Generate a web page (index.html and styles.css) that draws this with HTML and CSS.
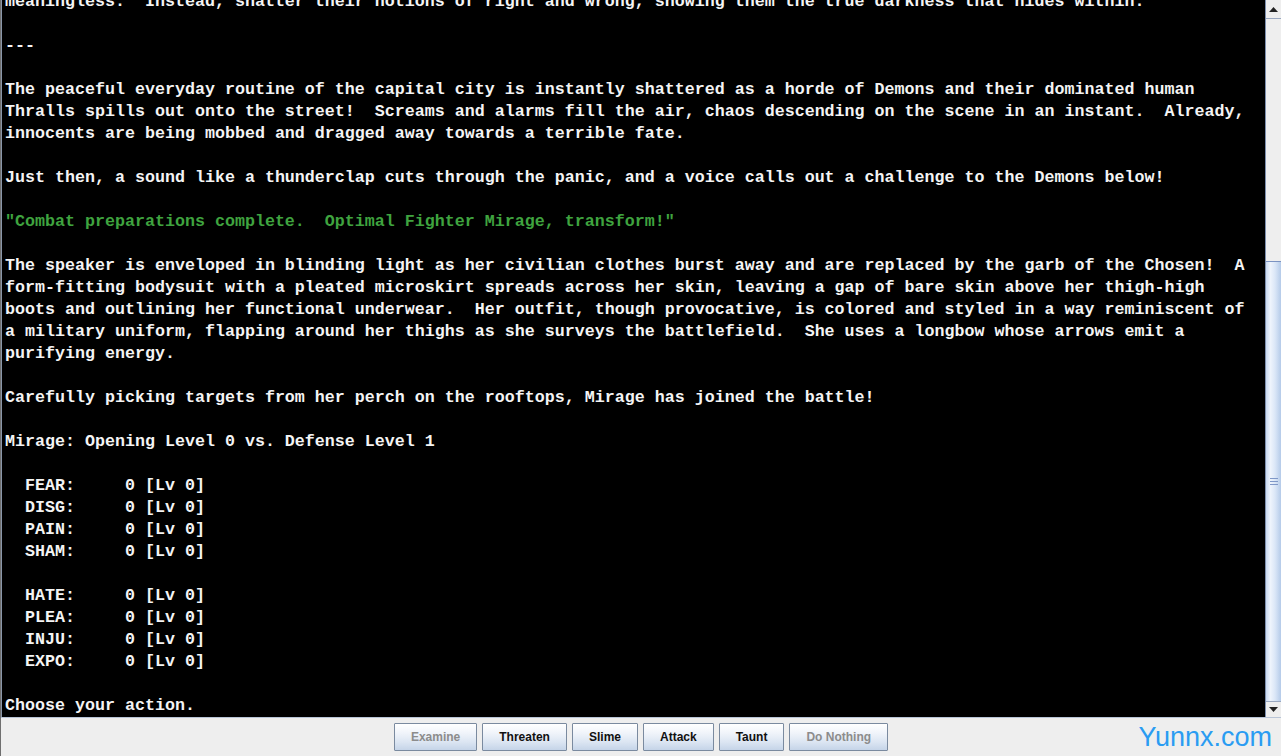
FILE: index.html
```html
<!DOCTYPE html>
<html>
<head>
<meta charset="utf-8">
<link rel="stylesheet" href="styles.css">
</head>
<body>
<div class="window">
  <div class="main">
    <div class="log">
<pre class="text">meaningless.  Instead, shatter their notions of right and wrong, showing them the true darkness that hides within.

---

The peaceful everyday routine of the capital city is instantly shattered as a horde of Demons and their dominated human
Thralls spills out onto the street!  Screams and alarms fill the air, chaos descending on the scene in an instant.  Already,
innocents are being mobbed and dragged away towards a terrible fate.

Just then, a sound like a thunderclap cuts through the panic, and a voice calls out a challenge to the Demons below!

<span class="speech">"Combat preparations complete.  Optimal Fighter Mirage, transform!"</span>

The speaker is enveloped in blinding light as her civilian clothes burst away and are replaced by the garb of the Chosen!  A
form-fitting bodysuit with a pleated microskirt spreads across her skin, leaving a gap of bare skin above her thigh-high
boots and outlining her functional underwear.  Her outfit, though provocative, is colored and styled in a way reminiscent of
a military uniform, flapping around her thighs as she surveys the battlefield.  She uses a longbow whose arrows emit a
purifying energy.

Carefully picking targets from her perch on the rooftops, Mirage has joined the battle!

Mirage: Opening Level 0 vs. Defense Level 1

  FEAR:     0 [Lv 0]
  DISG:     0 [Lv 0]
  PAIN:     0 [Lv 0]
  SHAM:     0 [Lv 0]

  HATE:     0 [Lv 0]
  PLEA:     0 [Lv 0]
  INJU:     0 [Lv 0]
  EXPO:     0 [Lv 0]

Choose your action.</pre>
    </div>
    <div class="scrollbar">
      <div class="sb-btn sb-up"><svg width="9" height="5" viewBox="0 0 9 5"><path d="M0 5 L4.5 0 L9 5 Z" fill="#222"/></svg></div>
      <div class="sb-track">
        <div class="sb-gap"></div>
        <div class="sb-thumb">
          <div class="grip"><span></span><span></span><span></span></div>
        </div>
      </div>
      <div class="sb-btn sb-down"><svg width="9" height="5" viewBox="0 0 9 5"><path d="M0 0 L9 0 L4.5 5 Z" fill="#222"/></svg></div>
    </div>
  </div>
  <div class="actions">
    <button class="btn disabled">Examine</button>
    <button class="btn">Threaten</button>
    <button class="btn">Slime</button>
    <button class="btn">Attack</button>
    <button class="btn">Taunt</button>
    <button class="btn disabled">Do Nothing</button>
    <div class="watermark">Yunnx.com</div>
  </div>
</div>
</body>
</html>
```

FILE: styles.css
```css
html, body {
  margin: 0;
  padding: 0;
  height: 100%;
  background: #eeeeee;
  overflow: hidden;
}

.window {
  height: 756px;
  display: flex;
  flex-direction: column;
  border-left: 1px solid #6f6f6f;
  box-sizing: border-box;
}

.main {
  height: 718px;
  display: flex;
  border-bottom: 1px solid #b8c4d6;
  box-sizing: border-box;
}

.log {
  flex: 1;
  background: #000000;
  border-left: 1px solid #8a96a8;
  overflow: hidden;
}

.text {
  margin: -9px 0 0 0;
  padding: 0 0 0 3px;
  font-family: "Liberation Mono", "Courier New", monospace;
  font-weight: bold;
  font-size: 16.667px;
  line-height: 22px;
  color: #f4f4f4;
  white-space: pre;
}

.speech {
  color: #3fa33f;
}

.scrollbar {
  width: 15px;
  display: flex;
  flex-direction: column;
  border-left: 1px solid #7d8fae;
  background: #eeeeee;
}

.sb-btn {
  height: 18px;
  display: flex;
  align-items: center;
  justify-content: center;
  background: #eeeeee;
}

.sb-up {
  border-bottom: 1px solid #9aa8c0;
}

.sb-down {
  height: 15px;
  border-top: 1px solid #9aa8c0;
}

.sb-track {
  flex: 1;
  display: flex;
  flex-direction: column;
}

.sb-gap {
  height: 242px;
}

.sb-thumb {
  flex: 1;
  border-top: 1px solid #7b93c2;
  background: linear-gradient(to right, #c9d9f1 0%, #eef4fc 30%, #dbe7f7 60%, #b5cbe9 100%);
  display: flex;
  align-items: center;
  justify-content: center;
}

.grip {
  display: flex;
  flex-direction: column;
  gap: 2px;
}

.grip span {
  display: block;
  width: 8px;
  height: 1px;
  background: #7f98c8;
}

.actions {
  flex: 1;
  position: relative;
  display: flex;
  align-items: center;
  justify-content: center;
  gap: 5px;
  background: #eeeeee;
}

.btn {
  height: 28px;
  padding: 0 16px;
  border: 1px solid #7a8a9f;
  border-radius: 1px;
  background: linear-gradient(to bottom, #ffffff 0%, #f0f4fa 35%, #dbe5f2 70%, #c5d4e8 100%);
  font-family: "Liberation Sans", Arial, sans-serif;
  font-weight: bold;
  font-size: 12px;
  color: #111111;
  margin: 0;
}

.btn.disabled {
  color: #8c8c8c;
}

.watermark {
  position: absolute;
  right: 9px;
  top: 2px;
  font-family: "Liberation Sans", Arial, sans-serif;
  font-size: 27px;
  color: #2a9cf2;
  line-height: 34px;
}
```
